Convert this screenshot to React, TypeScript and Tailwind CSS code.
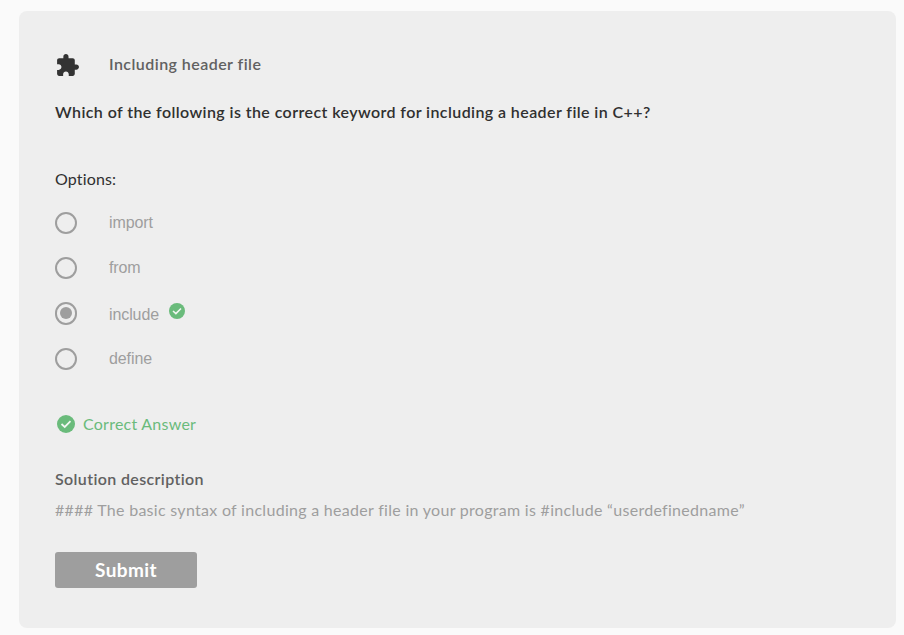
import React from "react";

const OPTIONS = [
  { label: "import", row: "h-[45px]", dy: "", ring: "h-[22px]" },
  { label: "from", row: "h-[45px]", dy: "", ring: "h-[22px]" },
  { label: "include", row: "h-[46px]", dy: "pt-[3px]", ring: "h-[23px]", chosen: true },
  { label: "define", row: "h-[45px]", dy: "", ring: "h-[22px]" },
];

function Check({ className }: { className: string }) {
  return (
    <svg viewBox="0 0 20 20" className={`block shrink-0 ${className}`}>
      <circle cx="10" cy="10" r="10" fill="#6abb7b" />
      <path d="M5 10 8.6 13.3 15 6.8" fill="none" stroke="#f3f7f3" strokeWidth="1.9" />
    </svg>
  );
}

export default function App() {
  return (
    <div className="h-[635px] w-[904px] overflow-hidden bg-[#fafafa] pt-[11px] pl-[19px] font-['Lato',sans-serif] text-[16px] leading-6 whitespace-nowrap">
      <main className="flex h-[617px] w-[877px] flex-col items-start rounded-lg bg-[#eeeeee] pt-[41px] pl-9">
        <header className="flex h-6 items-center">
          <svg viewBox="0 0 24 24" className="mt-0.5 mr-[29px] block size-[25px] fill-[#333333]">
            <path d="M20.5 11H19V7c0-1.1-.9-2-2-2h-4V3.5C13 2.12 11.88 1 10.5 1S8 2.12 8 3.5V5H4c-1.1 0-1.99.9-1.99 2v3.8H3.5c1.49 0 2.7 1.21 2.7 2.7s-1.21 2.7-2.7 2.7H2V20c0 1.1.9 2 2 2h3.8v-1.5c0-1.49 1.21-2.7 2.7-2.7 1.49 0 2.7 1.21 2.7 2.7V22H17c1.1 0 2-.9 2-2v-4h1.5c1.38 0 2.5-1.12 2.5-2.5S21.88 11 20.5 11z" />
          </svg>
          <h1 className="font-semibold tracking-[0.45px] text-[#616161]">Including header file</h1>
        </header>
        <h2 className="mt-6 font-semibold tracking-[0.41px] text-[#303030]">
          Which of the following is the correct keyword for including a header file in C++?
        </h2>
        <p className="mt-[43px] tracking-[0.15px] text-[#303030]">Options:</p>
        <div className="mt-[9px] flex flex-col font-['Liberation_Sans',Arial,sans-serif] text-[#9e9e9e]">
          {OPTIONS.map((o) => (
            <label key={o.label} className={`flex items-center ${o.row}`}>
              <span className={`mr-8 flex w-[22px] items-center justify-center rounded-full border-2 border-[#9e9e9e] ${o.ring}`}>
                {o.chosen && <span className="size-3 rounded-full bg-[#9e9e9e]" />}
              </span>
              <span className={`tracking-[-0.1px] ${o.dy}`}>{o.label}</span>
              {o.chosen && <Check className="mb-[5px] ml-[10px] size-4" />}
            </label>
          ))}
        </div>
        <div className="mt-[31px] flex h-6 items-center pl-0.5 text-[#6abb7b]">
          <Check className="size-[18px]" />
          <span className="ml-2 tracking-[0.25px]">Correct Answer</span>
        </div>
        <h3 className="mt-[31px] font-semibold tracking-[0.37px] text-[#616161]">Solution description</h3>
        <p className="mt-[7px] tracking-[0.29px] text-[#9e9e9e]">
          #### The basic syntax of including a header file in your program is #include “userdefinedname”
        </p>
        <button className="mt-[30px] h-9 w-[142px] rounded-[3px] bg-[#9e9e9e] pb-px text-[19px] font-bold tracking-[0.4px] text-white">
          Submit
        </button>
      </main>
    </div>
  );
}
